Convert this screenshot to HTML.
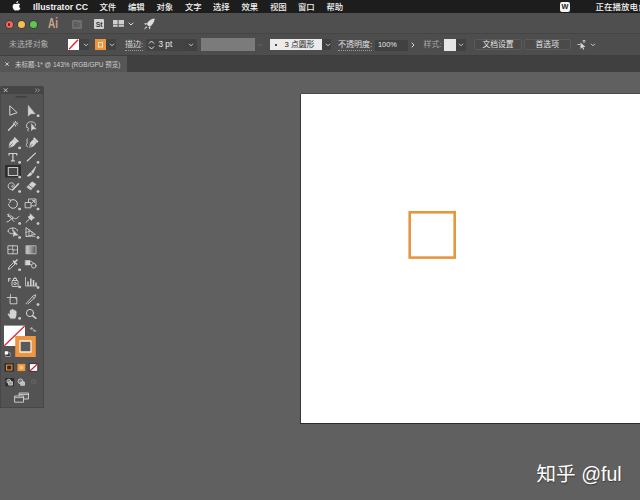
<!DOCTYPE html>
<html><head><meta charset="utf-8">
<style>
*{box-sizing:border-box;margin:0;padding:0}
html,body{width:640px;height:500px;overflow:hidden;background:#606060}
body{position:relative;font-family:"Liberation Sans","Noto Sans CJK SC",sans-serif;color:#ddd}
.abs{position:absolute}
#menubar{left:0;top:0;width:640px;height:13.400px;background:#1d1d1d}
#menubar span{position:absolute;top:0.5px;line-height:12px;font-size:8.400px;color:#f2f2f2;font-weight:500;white-space:nowrap}
#appbar{left:0;top:13.400px;width:640px;height:20px;background:#4f4f4f}
#ctrlbar{left:0;top:33.400px;width:640px;height:23px;background:#4d4d4d;border-top:1px solid #444;border-bottom:1px solid #3e3e3e}
#tabbar{left:0;top:56.400px;width:640px;height:16.100px;background:#404040}
#tab{left:0;top:0;width:127.300px;height:16.100px;background:#565656}
.t8{font-size:8px;line-height:10px;white-space:nowrap;color:#d6d6d6}
#artboard{left:301px;top:94px;width:345px;height:329px;background:#fff;box-shadow:-1px 0 0 #383838, 0 -1px 0 #4a4a4a, -1px 1px 0 #2c2c2c}
#panel{left:0;top:85.800px;width:44px;height:322.200px;background:#535353;border-right:1px solid #474747;border-bottom:1px solid #474747;border-left:1px solid #484848;border-radius:2px 2px 0 0;overflow:hidden}
#phead{left:0;top:0;width:44px;height:8.500px;background:#454545}
#wm{left:536.500px;top:461.500px;font-size:19.600px;line-height:24px;color:#fff;white-space:nowrap;text-shadow:0.5px 1px 1px rgba(0,0,0,0.45)}

.chev{position:absolute;width:5px;height:3px}
.ul{border-bottom:1px dotted #999}
.field{position:absolute;background:#3f3f3f}
.btn{position:absolute;top:5px;height:11px;border:1px solid #5a5a5a;border-radius:2px;background:#4a4a4a;font-size:7.8px;line-height:9px;text-align:center;color:#e4e4e4;white-space:nowrap}
</style></head><body>
<div id="menubar" class="abs">
<svg class="abs" style="left:12px;top:1px" width="9" height="10" viewBox="0 0 18 20"><path fill="#fff" d="M12.6 0c.1 1.200-.4 2.300-1.100 3.100-.8.900-1.900 1.500-3 1.400-.1-1.100.400-2.300 1.100-3C10.400.6 11.600.1 12.600 0zM16.300 6.800c-.1.100-2 1.200-2 3.600 0 2.800 2.500 3.800 2.500 3.800s-1.700 4.900-4.100 4.900c-1.100 0-1.900-.7-3.100-.7s-2.300.7-3.100.7C4.300 19.100 1.300 14.500 1.300 10.800c0-3.600 2.300-5.500 4.400-5.500 1.400 0 2.500.9 3.300.9.800 0 2.100-1 3.700-1 .600 0 2.500.2 3.600 1.600z"/></svg>
<span style="left:33px;font-weight:700;font-size:8.700px">Illustrator CC</span>
<span style="left:99.500px">文件</span>
<span style="left:128px">编辑</span>
<span style="left:156.500px">对象</span>
<span style="left:185px">文字</span>
<span style="left:213px">选择</span>
<span style="left:241.500px">效果</span>
<span style="left:270px">视图</span>
<span style="left:298px">窗口</span>
<span style="left:326.500px">帮助</span>
<div class="abs" style="left:560.300px;top:2px;width:9.600px;height:9.500px;background:#f4f4f4;border-radius:2px"></div>
<span style="left:561.600px;font-size:7.300px;color:#222;font-weight:700;top:0.8px">W</span>
<span style="left:595.500px;font-size:8.500px">正在播放电台</span>
</div>

<div id="appbar" class="abs"><div class="abs" style="left:0;top:-0.4px">
<div class="abs" style="left:5.500px;top:8px;width:7px;height:7px;border-radius:50%;background:#ec6a5e;box-shadow:0 0 0 0.8px rgba(50,30,25,0.55)"></div>
<div class="abs" style="left:7.800px;top:10.300px;width:2.400px;height:2.400px;border-radius:50%;background:#7a1410"></div><div class="abs" style="left:19.300px;top:11px;width:3.400px;height:1px;background:#9a6a10"></div><div class="abs" style="left:31.300px;top:11px;width:3.400px;height:1px;background:#2a7a22"></div>
<div class="abs" style="left:17.500px;top:8px;width:7px;height:7px;border-radius:50%;background:#f4bf4f;box-shadow:0 0 0 0.8px rgba(50,40,20,0.55)"></div>
<div class="abs" style="left:29.500px;top:8px;width:7px;height:7px;border-radius:50%;background:#61c554;box-shadow:0 0 0 0.8px rgba(25,45,25,0.55)"></div>
<div class="abs" style="left:48px;top:2.500px;font-size:13.800px;line-height:16px;color:#c7a48c;font-weight:700;transform:scaleX(0.72);transform-origin:0 0">Ai</div>
<div class="abs" style="left:72px;top:6.500px;width:10px;height:9.500px;background:#6e6e6e;border-radius:1px;font-size:6.500px;line-height:10px;text-align:center;color:#565656;font-weight:700">Br</div>
<div class="abs" style="left:94px;top:6px;width:10px;height:10px;background:#d2d2d2;border-radius:1px;font-size:7px;line-height:11px;text-align:center;color:#3a3a3a;font-weight:700;letter-spacing:-0.3px">St</div>
<svg class="abs" style="left:113px;top:6.800px" width="11" height="8" viewBox="0 0 11 8"><rect x="0" y="0" width="4.600" height="4.400" fill="#cfcfcf"/><rect x="5.600" y="0" width="5.400" height="4.400" fill="#cfcfcf"/><rect x="0" y="5.100" width="4.600" height="1.700" fill="#cfcfcf"/><rect x="5.600" y="5.100" width="5.400" height="1.700" fill="#cfcfcf"/></svg>
<svg class="chev" style="left:128px;top:8.500px;width:6px;height:4px" viewBox="0 0 6 4"><path d="M0.7 0.7L3 3L5.300 0.7" fill="none" stroke="#ddd" stroke-width="1"/></svg>
<svg class="abs" style="left:143.300px;top:4.800px" width="12.500" height="12.500" viewBox="0 0 11 11"><path d="M10.300 0.5C7 0.8 4.500 2.800 3.200 5.500L5.500 7.800C8.200 6.500 10 4 10.300 0.500Z" fill="#dedede"/><path d="M3.500 4.200L0.800 5L2.600 6.200ZM6.800 7.500L6 10.200L4.800 8.400ZM2.800 7.200L0.600 10.400L3.800 8.200Z" fill="#dedede"/></svg>

</div></div>

<div id="ctrlbar" class="abs"><div class="abs" style="left:0;top:-0.4px">
<div class="abs t8" style="left:9px;top:5.5px;color:#b0b0b0;font-size:7.900px">未选择对象</div>
<svg class="abs" style="left:68px;top:5px" width="11" height="11" viewBox="0 0 11 11"><rect width="11" height="11" fill="#fff"/><path d="M1 10.200L10 0.8" stroke="#d8232a" stroke-width="1.300"/></svg>
<div class="field" style="left:79px;top:5px;width:10px;height:11px;background:#424242"></div>
<svg class="chev" style="left:82.5px;top:9.0px;width:6px;height:4px" viewBox="0 0 6 4"><path d="M1 0.8L3 2.800L5 0.8" fill="none" stroke="#d8d8d8" stroke-width="0.9"/></svg>
<svg class="abs" style="left:95px;top:5px" width="11" height="11" viewBox="0 0 11 11"><rect width="11" height="11" fill="#ee9540"/><rect x="3.500" y="3.500" width="4" height="4.500" fill="none" stroke="#f6ead8" stroke-width="0.9"/></svg>
<div class="field" style="left:106px;top:5px;width:10px;height:11px;background:#424242"></div>
<svg class="chev" style="left:108.5px;top:9.0px;width:6px;height:4px" viewBox="0 0 6 4"><path d="M1 0.8L3 2.800L5 0.8" fill="none" stroke="#d8d8d8" stroke-width="0.9"/></svg>
<div class="abs t8 ul" style="left:125px;top:5.5px;color:#d8d8d8">描边:</div>
<div class="field" style="left:146px;top:5px;width:51px;height:11.500px;background:#434343"></div>
<svg class="abs" style="left:148px;top:6px" width="7" height="10" viewBox="0 0 7 10"><path d="M1 3.500L3.500 1L6 3.500M1 6.500L3.500 9L6 6.500" fill="none" stroke="#e0e0e0" stroke-width="1"/></svg>
<div class="abs t8" style="left:158.500px;top:5.5px;color:#eee;font-size:8.200px">3 pt</div>
<div class="field" style="left:185px;top:5px;width:12px;height:11.500px;background:#414141"></div>
<svg class="chev" style="left:188px;top:9.0px;width:6px;height:4px" viewBox="0 0 6 4"><path d="M1 0.8L3 2.800L5 0.8" fill="none" stroke="#d8d8d8" stroke-width="0.9"/></svg>
<div class="abs" style="left:200.500px;top:3.800px;width:54.500px;height:13.300px;background:#7b7b7b"></div>
<svg class="chev" style="left:257px;top:9.0px;width:6px;height:4px" viewBox="0 0 6 4"><path d="M0.7 0.7L3 3L5.3 0.7" fill="none" stroke="#666" stroke-width="1"/></svg>
<div class="abs" style="left:270px;top:5.2px;width:52px;height:11px;background:#ebebeb"></div>
<div class="abs" style="left:274.500px;top:9.8px;width:2.500px;height:2.500px;border-radius:50%;background:#111"></div>
<div class="abs t8" style="left:284.500px;top:5.6px;color:#1a1a1a;font-size:7.800px">3 点圆形</div>
<div class="field" style="left:322px;top:5.2px;width:9px;height:11px;background:#414141"></div>
<svg class="chev" style="left:324.5px;top:9.0px;width:6px;height:4px" viewBox="0 0 6 4"><path d="M1 0.8L3 2.800L5 0.8" fill="none" stroke="#d8d8d8" stroke-width="0.9"/></svg>
<div class="abs t8 ul" style="left:338px;top:5.5px;color:#e0e0e0">不透明度:</div>
<div class="field" style="left:375px;top:5.5px;width:32.500px;height:11px;background:#414141"></div>
<div class="abs t8" style="left:377.500px;top:5.7px;color:#e6e6e6;font-size:8px;transform:scaleX(0.92);transform-origin:0 0">100%</div>
<svg class="abs" style="left:411px;top:8px" width="4" height="6" viewBox="0 0 4 6"><path d="M0.7 0.7L3 3L0.7 5.3" fill="none" stroke="#ddd" stroke-width="1"/></svg>
<div class="abs t8" style="left:423.500px;top:5.5px;color:#a8a8a8">样式:</div>
<div class="abs" style="left:444px;top:5px;width:12px;height:11.500px;background:#e6e6e6"></div>
<div class="field" style="left:456px;top:5px;width:9.500px;height:11.500px;background:#424242"></div>
<svg class="chev" style="left:458.2px;top:9.0px;width:6px;height:4px" viewBox="0 0 6 4"><path d="M1 0.8L3 2.800L5 0.8" fill="none" stroke="#d8d8d8" stroke-width="0.9"/></svg>
<div class="btn" style="left:474px;width:48px">文档设置</div>
<div class="btn" style="left:524px;width:46.500px">首选项</div>
<svg class="abs" style="left:577px;top:5.5px" width="10" height="10" viewBox="0 0 10 10"><path d="M3.500 2.500L3.500 9L5.200 7.300L6.300 9.800L7.300 9.300L6.200 7L8.500 7Z" fill="#d8d8d8"/><path d="M0.5 4.500h2.500M5.500 0.8h3M7 0v3" stroke="#d0d0d0" stroke-width="0.9"/></svg>
<svg class="chev" style="left:590px;top:8.5px;width:6px;height:4px" viewBox="0 0 6 4"><path d="M1 0.8L3 2.800L5 0.8" fill="none" stroke="#d8d8d8" stroke-width="0.9"/></svg>
</div></div>
<div id="tabbar" class="abs"><div id="tab" class="abs">
<svg class="abs" style="left:5.300px;top:5.400px" width="4.200" height="4.200" viewBox="0 0 5 5"><path d="M0.5 0.5L4.500 4.500M4.500 0.5L0.5 4.500" stroke="#e8e8e8" stroke-width="1"/></svg>
<div class="abs" style="left:15px;top:3.600px;font-size:7.300px;line-height:10px;color:#cfcfcf;white-space:nowrap;transform:scaleX(0.89);transform-origin:0 0">未标题-1* @ 143% (RGB/GPU 预览)</div>
</div></div>

<div id="artboard" class="abs"></div>
<svg class="abs" style="left:400px;top:200px" width="70" height="70" viewBox="400 200 70 70"><rect x="409.700" y="212.300" width="45" height="45.300" fill="none" stroke="#e8953f" stroke-width="2.600"/></svg>
<div id="panel" class="abs"><div id="phead" class="abs"></div><svg class="abs" style="left:-1px;top:0.2px" width="44" height="321" viewBox="0 86 44 321" fill="none" stroke="#d4d4d4" stroke-width="1" stroke-linejoin="round" stroke-linecap="round">
<!-- header -->
<path d="M4 88.600L7.200 91.800M7.200 88.600L4 91.800" stroke="#dcdcdc" stroke-width="0.85"/>
<path d="M35.500 88.800L37 90.300L35.500 91.800M38 88.800L39.500 90.300L38 91.800" stroke="#b8b8b8" stroke-width="0.7"/>
<path d="M16 96.800H26.500" stroke="#3c3c3c" stroke-width="1.200"/>
<!-- row1 selection -->
<path d="M9.800 106.200L9.800 115.200L16.800 112.800Z" stroke-width="1"/>
<path d="M28.300 105.800L28.300 116L30.800 113.700L34.800 113.700Z" fill="#d4d4d4" stroke-width="0.6"/>
<rect x="37.6" y="115.0" width="1.400" height="1.400" fill="#bdbdbd"/>
<!-- row2 wand / lasso -->
<path d="M8.500 130.300L14.300 124.300" stroke-width="1.400"/>
<path d="M15.500 121.300v1.500M15.500 125v1.200M13.300 123.600h1.200M16.600 123.600h1.200M13.800 122l.6.600M17.200 122l-.6.600M17.200 125.300l-.6-.6" stroke-width="0.8"/>
<path d="M27 127.500C25.500 125.500 27 122 30.500 121.800C34 121.600 36.200 123.500 35.500 125.500M27 127.500C28.500 127.500 29 128.500 28 129.500C27.300 130.200 27.500 130.800 28.200 131" stroke-width="0.9"/>
<path d="M31.500 124L31.500 130.500L33 129L35.800 129Z" fill="#d4d4d4" stroke-width="0.5"/>
<!-- row3 pen / curvature -->
<path d="M9 147L10 142.500L14 139L17 142L13.500 146Z" fill="#d4d4d4" stroke-width="0.6"/>
<path d="M14.600 138.200L17.800 141.400" stroke-width="1.800"/>
<path d="M9.300 146.700L12.300 143.700" stroke="#535353" stroke-width="0.7"/>
<rect x="19.1" y="147.2" width="1.400" height="1.400" fill="#bdbdbd"/>
<path d="M29.500 147L30.500 142.500L33.500 139.500L36.500 142.500L33.500 146Z" fill="#d4d4d4" stroke-width="0.6"/>
<path d="M34.200 138.500L37.400 141.700" stroke-width="1.800"/>
<path d="M29.800 146.700L32.300 144.200" stroke="#535353" stroke-width="0.7"/>
<path d="M27.500 138.500C25.500 140 28.500 142 26.500 144.500C25.800 145.500 26.300 146.500 27.500 146.800" stroke-width="0.9"/>
<!-- row4 T / line -->
<path d="M9 155.500V153.500H16.800V155.500M12.900 153.500V160.800M11 160.800H14.800" stroke-width="1.200" stroke-linecap="butt"/>
<rect x="19.1" y="161.7" width="1.400" height="1.400" fill="#bdbdbd"/>
<path d="M27.200 161L35.500 153.200" stroke-width="1.100"/>
<rect x="37.5" y="161.7" width="1.400" height="1.400" fill="#bdbdbd"/>
<!-- row5 rect selected / brush -->
<rect x="5" y="165" width="16" height="12.500" fill="#2e2e2e" stroke="none"/>
<rect x="8.300" y="167.500" width="9.400" height="8" stroke-width="1.100" stroke="#c8c8c8" fill="#4a4a4a"/>
<rect x="19.1" y="176.3" width="1.400" height="1.400" fill="#bdbdbd"/>
<path d="M35.500 167L31.500 171.800L32.800 173Z" fill="#d4d4d4" stroke-width="0.8"/>
<path d="M30.800 172.500C29 173 28.800 175 27 176C29 176.500 31.800 176 32 173.800Z" fill="#d4d4d4" stroke-width="0.5"/>
<rect x="37.5" y="176.3" width="1.400" height="1.400" fill="#bdbdbd"/>
<!-- row6 shaper / eraser -->
<path d="M12.500 185.500C11.500 185.500 11.200 187 12.500 187.200C14.500 187.300 15 184.500 12.800 183.200C10.200 182 7.500 184.200 8.300 187C8.800 188.800 10.500 189.800 12.500 189.500" stroke-width="0.9"/>
<path d="M12.500 190L18.500 183.800" stroke-width="1.500"/>
<rect x="19.1" y="190.8" width="1.400" height="1.400" fill="#bdbdbd"/>
<path d="M27 187L32 181.800L36 184.300L31 189.800Z" fill="#d4d4d4" stroke-width="0.6"/>
<path d="M28.800 185.300L32.600 188" stroke="#535353" stroke-width="0.8"/>
<rect x="37.5" y="190.8" width="1.400" height="1.400" fill="#bdbdbd"/>
<!-- row7 rotate / scale -->
<path d="M10.500 200.300A4.400 4.400 0 1 1 8.600 204.200" stroke-width="1"/>
<path d="M8.300 199.200L10.800 200.500L9.600 202.800" stroke-width="0.9" fill="none"/>
<rect x="19.1" y="208.3" width="1.400" height="1.400" fill="#bdbdbd"/>
<rect x="25.500" y="202.500" width="5.500" height="5.300" stroke-width="0.9"/>
<path d="M28.500 202.500V199H36V205.800H31" stroke-width="0.9"/>
<path d="M31.500 203.500L34.500 200.500M32.500 200.500H34.500V202.500" stroke-width="0.8"/>
<rect x="37.5" y="208.3" width="1.400" height="1.400" fill="#bdbdbd"/>
<!-- row8 width / pin -->
<path d="M7 222C10 221.500 11 218 13 218C15 218 15.500 220.500 18.800 216.500" stroke-width="1"/>
<path d="M7.500 214.500L14 221.500M9 213.800L8 216.500L10.800 215.800" stroke-width="0.9"/>
<path d="M10.500 217.500C11.500 214.500 14 217 12.500 219" stroke-width="0.8"/>
<rect x="19.1" y="222.8" width="1.400" height="1.400" fill="#bdbdbd"/>
<path d="M30.500 214L34.500 218L32.800 218.500L31.500 220.500L28 217L30 215.700Z" fill="#d4d4d4" stroke-width="0.6"/>
<path d="M29.500 219L26 222.300" stroke-width="1"/>
<rect x="37.5" y="222.8" width="1.400" height="1.400" fill="#bdbdbd"/>
<!-- row9 shape builder / perspective -->
<path d="M8 231C8 229 10.500 228 12.800 228C15.500 228 17.500 229 17.500 230.800" stroke-width="0.9"/>
<path d="M8 231C8.500 233 10.500 233.800 12.800 233.800M12.800 228V231" stroke-width="0.9"/>
<path d="M13.500 230.500L13.500 236.500L15 235.200L17.800 235.200Z" fill="#d4d4d4" stroke-width="0.5"/>
<rect x="19.1" y="236.8" width="1.400" height="1.400" fill="#bdbdbd"/>
<path d="M26 228V236.500L35 234.500Z" stroke-width="0.9"/>
<path d="M26 232.300L30.500 231.300M29 229.500V236M32 232V235.200" stroke-width="0.7"/>
<path d="M26 236.500H36" stroke-width="0.7" stroke-dasharray="1 1"/>
<rect x="37.5" y="236.8" width="1.400" height="1.400" fill="#bdbdbd"/>
<!-- row10 mesh / gradient -->
<rect x="8.300" y="245.800" width="9.200" height="8" stroke-width="0.9"/>
<path d="M8.300 249.500C11 248 14.500 251.500 17.500 249.500M12.800 245.800C11.500 248.500 14.500 251 12.800 253.800" stroke-width="0.8"/>
<rect x="26.300" y="245.800" width="9.700" height="8" fill="url(#gr)" stroke="#c8c8c8" stroke-width="0.8"/>
<!-- row11 eyedropper / blend -->
<path d="M8.500 269L9 267L13.500 262.500L15 264L10.500 268.500Z" stroke-width="0.9"/>
<path d="M13.500 261L16.500 264M14.800 262.300L17 260" stroke-width="1.600"/>
<rect x="19.1" y="269.0" width="1.400" height="1.400" fill="#bdbdbd"/>
<rect x="25.500" y="260.500" width="4.500" height="4.500" fill="#d4d4d4" stroke-width="0.5"/>
<path d="M28 262.500L33 266.500M30.500 261L35 264" stroke-width="0.8"/>
<circle cx="33.800" cy="265.800" r="2.300" stroke-width="0.9" fill="#535353"/>
<!-- row12 symbol sprayer / graph -->
<rect x="12" y="280.500" width="6" height="6" rx="0.8" stroke-width="0.9"/>
<path d="M13.500 280.500V278.500H16.500V280.500M15 278.500V277.300" stroke-width="0.9"/>
<circle cx="15" cy="283.500" r="1.300" stroke-width="0.8"/>
<path d="M8.500 278.500H10.500M8.500 278.500V281.500M8.500 280H10" stroke-width="0.8"/>
<rect x="19.1" y="286.3" width="1.400" height="1.400" fill="#bdbdbd"/>
<path d="M25.500 277.500V286H37" stroke-width="0.8"/>
<path d="M28 286V281.500M30.800 286V278.500M33.500 286V280M36 286V282.500" stroke-width="1.500" stroke-linecap="butt"/>
<rect x="37.5" y="286.8" width="1.400" height="1.400" fill="#bdbdbd"/>
<!-- row13 artboard / slice -->
<path d="M10.500 297.500H16.800V303.800H10.500Z" stroke-width="0.9"/>
<path d="M7.300 297.500H10.500M10.500 294.300V297.500" stroke-width="0.8"/>
<path d="M14.800 297.500L16.800 299.500" stroke-width="0.8"/>
<path d="M26 303.800L33.500 295.500L35.800 294.800L35 297.500L28 303.800" stroke-width="0.9"/>
<path d="M32.500 296.500L34 298.200" stroke-width="0.8"/>
<rect x="37.5" y="303.8" width="1.400" height="1.400" fill="#bdbdbd"/>
<!-- row14 hand / zoom -->
<path d="M10.500 318.300C9.500 316.500 8.500 315.500 8 314.300C8.300 313.500 9.300 313.800 10 314.800V310.800C10.300 310 11.200 310 11.500 310.800V309.800C11.800 309 12.800 309 13.100 309.800V310.300C13.400 309.600 14.400 309.600 14.700 310.400V311.300C15 310.700 16 310.700 16.200 311.500C16.400 314 16.200 316.500 15.200 318.300Z" fill="#d4d4d4" stroke-width="0.5"/>
<rect x="19.1" y="317.7" width="1.400" height="1.400" fill="#bdbdbd"/>
<circle cx="30" cy="313" r="3.600" stroke-width="1"/>
<path d="M32.800 315.800L36 318.300" stroke-width="1.500"/>
<!-- fill / stroke -->
<rect x="4" y="325.600" width="21" height="20.400" fill="#fff" stroke="none"/>
<path d="M4.300 345.700L24.700 326" stroke="#d8232a" stroke-width="1.200" stroke-linecap="butt"/>
<rect x="15.200" y="336" width="20.600" height="21" fill="#ee9540" stroke="none"/>
<rect x="20" y="341" width="11" height="11" fill="#5a5a5a" stroke="#fbefe0" stroke-width="1.300"/>
<path d="M30.500 328.500C32.500 327.800 34.500 329 34.800 331.500M30.500 328.500L32 327.300M30.500 328.500L32 329.800M34.800 331.500L33.600 330.300M34.800 331.500L36 330.300" stroke-width="0.8" stroke="#bdbdbd"/>
<rect x="6.300" y="352.700" width="3.800" height="3.800" fill="#222" stroke="#ddd" stroke-width="0.6"/>
<rect x="4.600" y="351" width="3.800" height="3.800" fill="#fff" stroke="#222" stroke-width="0.4"/>
<!-- color / gradient / none -->
<rect x="4.600" y="363.300" width="9.300" height="8.300" fill="#2a2a2a" stroke="none"/>
<rect x="6.600" y="365" width="5.300" height="5" fill="#3a2a1a" stroke="#ee9540" stroke-width="1.100"/>
<rect x="17.200" y="363.500" width="8.500" height="8" fill="#ee9540" stroke="#3a3a3a" stroke-width="0.5"/>
<rect x="19.500" y="365.700" width="3.800" height="3.600" fill="#f8c48c" stroke="none"/>
<rect x="29.600" y="363.600" width="8.200" height="7.800" fill="#fff" stroke="#2a2a2a" stroke-width="0.9"/>
<path d="M30.200 370.800L37.200 364.200" stroke="#d8232a" stroke-width="1.200"/>
<!-- draw modes -->
<rect x="5.300" y="378" width="8.800" height="8.300" fill="#2c2c2c" stroke="none"/>
<circle cx="8.800" cy="381.300" r="2" stroke-width="0.8" fill="#777"/>
<rect x="9" y="381.800" width="3.500" height="3.300" stroke-width="0.8" fill="#999"/>
<circle cx="20.500" cy="381.300" r="2.400" stroke-width="0.8" fill="#777"/>
<rect x="21" y="382" width="3.500" height="3.300" stroke-width="0.8" fill="#bbb"/>
<circle cx="33.500" cy="381.800" r="2.200" stroke="#6a6a6a" stroke-width="0.8"/>
<circle cx="33.500" cy="381.800" r="0.9" fill="#6a5a78" stroke="none"/>
<!-- screen mode -->
<rect x="19.500" y="393" width="9" height="6" stroke-width="0.9" fill="#606060"/>
<path d="M19.500 394.500H28.500" stroke-width="0.8"/>
<rect x="15" y="396" width="8.500" height="6.200" stroke-width="0.9" fill="#535353"/>
<path d="M15 397.600H23.500" stroke-width="0.8"/>
<defs><linearGradient id="gr" x1="0" x2="1" y1="0" y2="0"><stop offset="0" stop-color="#d0d0d0"/><stop offset="1" stop-color="#555"/></linearGradient></defs>
</svg></div>
<div id="wm" class="abs">知乎 @ful</div>
</body></html>
